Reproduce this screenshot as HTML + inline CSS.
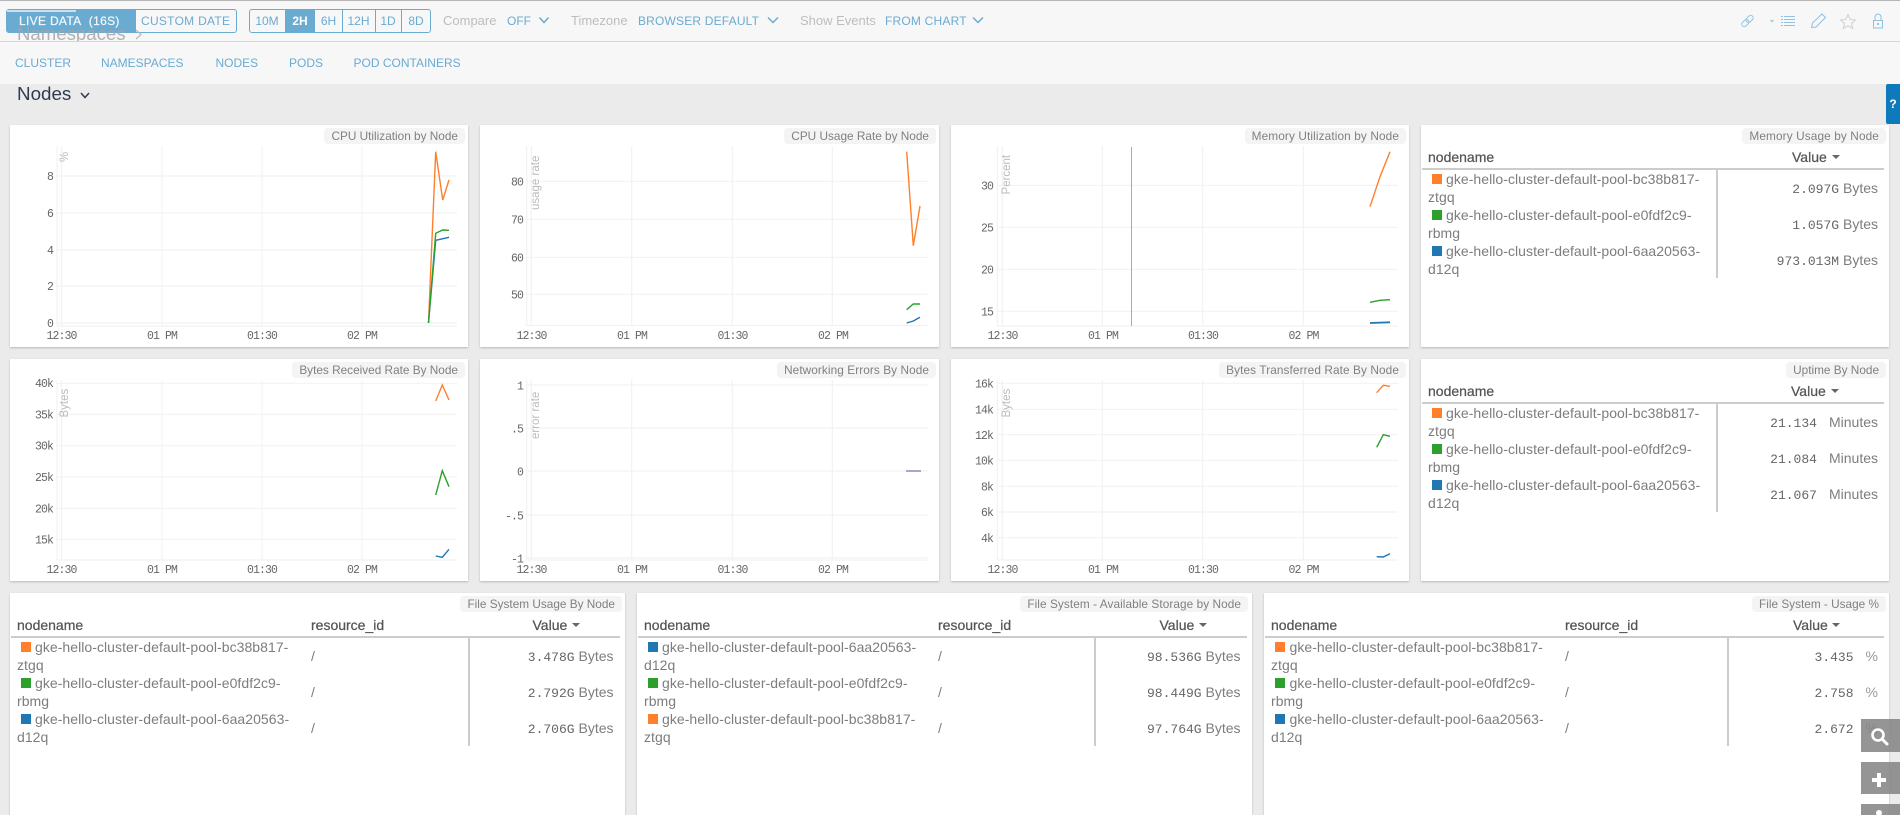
<!DOCTYPE html>
<html><head><meta charset="utf-8"><title>Nodes</title>
<style>
html,body{margin:0;padding:0;width:1900px;height:815px;overflow:hidden;background:#ebebeb}
body{position:relative;font-family:"Liberation Sans",sans-serif;color:#777}
div,span.a{position:absolute;white-space:nowrap}
.tb{left:0;top:0;width:1900px;background:#f7f7f7;border-top:1px solid #b5b5b5;box-sizing:border-box;border-bottom:1px solid #d6d6d6;height:42px}
.nv{left:0;top:42px;width:1900px;height:42px;background:#f7f7f7}
.c{color:#6aabd2;font-size:12px;line-height:16px;height:16px}
.g{color:#bdbdbd;font-size:13px;line-height:16px;height:16px;top:13px}
.p{background:#fff;box-shadow:0 1px 2px rgba(0,0,0,.22)}
.tag{background:#f4f4f4;border-radius:4px;font-size:11.8px;line-height:16px;height:16px;padding:0 7px;color:#808080}
.h{font-size:14px;line-height:18px;color:#555;-webkit-text-stroke:.25px #555}
.r{height:2px;background:#ccc}
.s{width:2px;background:#ccc}
.w{width:10px;height:10px}
.o{background:#ff7f2a}.e{background:#2ca02c}.b{background:#1f77b4}
.n{font-size:14px;line-height:18px;color:#7d7d7d;letter-spacing:.05px}
.v{font-size:14px;line-height:18px;color:#7d7d7d;text-align:right}
.v i{font:13px "Liberation Mono",monospace;color:#666}
.tri{width:0;height:0;border-left:4px solid transparent;border-right:4px solid transparent;border-top:4px solid #666}
svg{position:absolute;left:0;top:0}
.gr{stroke:#f2f2f2;stroke-width:1.2;fill:none}
.ln{fill:none;stroke-width:1.4}
.lb{font:11.5px "Liberation Mono",monospace;fill:#666;letter-spacing:-.9px}
.yt{font:11.5px "Liberation Sans",sans-serif;fill:#bbb}
.fb{left:1861px;width:39px;background:rgba(130,130,130,.85)}
</style></head><body>

<div class="tb"></div>
<div class="nv"></div>

<div style="left:6px;top:9px;width:130px;height:24px;background:#6aabd2;border-radius:3px 0 0 3px;box-sizing:border-box;border:1px solid #6aabd2"></div>
<div style="left:17px;top:23px;height:18px;overflow:hidden;font-size:18.6px;line-height:22px;color:#a5a5a5;opacity:.85">Namespaces</div>
<svg width="1900" height="815" style="z-index:1"><polyline points="136,30 141,34.5 136,39" fill="none" stroke="#bbb" stroke-width="1.3"/></svg>

<div style="left:7px;top:10px;width:69px;height:1.5px;background:#c9e1ef"></div>
<div class="c" style="left:19px;top:13px;color:#f4f9fc;letter-spacing:.32px;-webkit-text-stroke:.2px #f4f9fc">LIVE DATA&nbsp;&nbsp;(16S)</div>
<div style="left:135px;top:9px;width:102px;height:24px;box-sizing:border-box;border:1px solid #6aabd2;border-left:0;border-radius:0 3px 3px 0"></div>
<div class="c" style="left:141px;top:13px;letter-spacing:.28px">CUSTOM DATE</div>

<div style="left:249px;top:9px;width:182px;height:24px;box-sizing:border-box;border:1px solid #6aabd2;border-radius:3px"></div>
<div style="left:285px;top:9px;width:30px;height:24px;background:#6aabd2"></div>
<div style="left:342px;top:9px;width:1px;height:24px;background:#6aabd2"></div>
<div style="left:375px;top:9px;width:1px;height:24px;background:#6aabd2"></div>
<div style="left:401px;top:9px;width:1px;height:24px;background:#6aabd2"></div>
<div class="c" style="left:249px;width:36px;text-align:center;top:13px">10M</div>
<div class="c" style="left:285px;width:30px;text-align:center;top:13px;color:#fff;font-weight:bold">2H</div>
<div class="c" style="left:315px;width:27px;text-align:center;top:13px">6H</div>
<div class="c" style="left:342px;width:33px;text-align:center;top:13px">12H</div>
<div class="c" style="left:375px;width:26px;text-align:center;top:13px">1D</div>
<div class="c" style="left:401px;width:30px;text-align:center;top:13px">8D</div>

<div class="g" style="left:443px">Compare</div>
<div class="c" style="left:507px;top:13px">OFF</div>
<div class="g" style="left:571px">Timezone</div>
<div class="c" style="left:638px;top:13px;letter-spacing:.18px">BROWSER DEFAULT</div>
<div class="g" style="left:800px">Show Events</div>
<div class="c" style="left:885px;top:13px;letter-spacing:.2px">FROM CHART</div>

<div class="c" style="left:15px;top:55px">CLUSTER</div>
<div class="c" style="left:101px;top:55px">NAMESPACES</div>
<div class="c" style="left:215.5px;top:55px">NODES</div>
<div class="c" style="left:289px;top:55px">PODS</div>
<div class="c" style="left:353.5px;top:55px">POD CONTAINERS</div>

<div style="left:17px;top:83px;font-size:18.8px;line-height:22px;color:#2f3a50">Nodes</div>

<div style="left:1886px;top:84px;width:14px;height:40px;background:#0f7abb;border-radius:2px 0 0 2px;color:#fff;font-weight:bold;font-size:12px;line-height:40px;text-align:center">?</div>

<!-- panels -->
<div class="p" style="left:10px;top:125px;width:458px;height:222px"></div>
<div class="p" style="left:480px;top:125px;width:459px;height:222px"></div>
<div class="p" style="left:951px;top:125px;width:458px;height:222px"></div>
<div class="p" style="left:1421px;top:125px;width:468px;height:222px"></div>
<div class="p" style="left:10px;top:359px;width:458px;height:222px"></div>
<div class="p" style="left:480px;top:359px;width:459px;height:222px"></div>
<div class="p" style="left:951px;top:359px;width:458px;height:222px"></div>
<div class="p" style="left:1421px;top:359px;width:468px;height:222px"></div>
<div class="p" style="left:10px;top:593px;width:615px;height:240px"></div>
<div class="p" style="left:637px;top:593px;width:615px;height:240px"></div>
<div class="p" style="left:1264px;top:593px;width:625px;height:240px"></div>

<!-- tags -->
<div class="tag" style="right:1435px;top:128px">CPU Utilization by Node</div>
<div class="tag" style="right:964px;top:128px">CPU Usage Rate by Node</div>
<div class="tag" style="right:494px;top:128px;letter-spacing:.12px">Memory Utilization by Node</div>
<div class="tag" style="right:14px;top:128px;letter-spacing:.12px">Memory Usage by Node</div>
<div class="tag" style="right:1435px;top:362px">Bytes Received Rate By Node</div>
<div class="tag" style="right:964px;top:362px;letter-spacing:.08px">Networking Errors By Node</div>
<div class="tag" style="right:494px;top:362px;letter-spacing:.1px">Bytes Transferred Rate By Node</div>
<div class="tag" style="right:14px;top:362px">Uptime By Node</div>
<div class="tag" style="right:1278px;top:596px">File System Usage By Node</div>
<div class="tag" style="right:652px;top:596px;letter-spacing:.07px">File System - Available Storage by Node</div>
<div class="tag" style="right:14px;top:596px">File System - Usage %</div>

<svg width="1900" height="815" style="z-index:1">
<!-- toolbar chevrons -->
<g fill="none" stroke="#6aabd2" stroke-width="1.5">
<polyline points="539.5,17.5 544,22.5 548.5,17.5"/>
<polyline points="768,17.5 773,22.5 778,17.5"/>
<polyline points="973,17.5 978,22.5 983,17.5"/>
</g>
<polyline points="81,93 85,97.5 89,93" fill="none" stroke="#2f3a50" stroke-width="1.5"/>
<!-- right icons -->
<g fill="none" stroke="#8fc1e0" stroke-width="1">
<g transform="rotate(-45 1747.5 21)"><rect x="1740.5" y="18.5" width="8" height="5" rx="2.5"/><rect x="1746.5" y="18.5" width="8" height="5" rx="2.5"/></g>
<polyline points="1770.5,20 1772,21.5 1773.5,20"/>
<path d="M1784 16.5h11M1784 19.5h11M1784 22.5h11M1784 25.5h11"/>
<path d="M1781 16.5h2M1781 19.5h2M1781 22.5h2M1781 25.5h2"/>
<path d="M1811.5 27.5l1-4.5 9.5-9 3.5 3.5-9.5 9.5z"/>
<rect x="1873.5" y="20.5" width="9" height="7.5"/>
<path d="M1875 20.5v-3.5a3 3 0 0 1 6 0v3.5"/>
</g>
<rect x="1877" y="23" width="2" height="2" fill="#8fc1e0"/>
<polygon points="1848,14.5 1850.2,19.5 1855.5,20 1851.5,23.5 1852.7,28.5 1848,25.8 1843.3,28.5 1844.5,23.5 1840.5,20 1845.8,19.5" fill="none" stroke="#cfcfcf" stroke-width="1"/>

<!-- Chart 1 -->
<path class="gr" d="M57 146V326M61.5 146V326M162 146V326M262 146V326M362 146V326M57 176H457M57 213H457M57 250H457M57 286H457M57 323H457M57 326H457"/>
<g class="lb" text-anchor="end"><text x="53" y="180">8</text><text x="53" y="217">6</text><text x="53" y="254">4</text><text x="53" y="290">2</text><text x="53" y="327">0</text></g>
<g class="lb" text-anchor="middle"><text x="61.5" y="339">12:30</text><text x="162" y="339">01 PM</text><text x="262" y="339">01:30</text><text x="362" y="339">02 PM</text></g>
<text class="yt" transform="translate(68,162) rotate(-90)">%</text>
<polyline class="ln" stroke="#ff7f2a" points="428.5,323 435.7,151.7 442.7,200 449,180"/>
<polyline class="ln" stroke="#1f77b4" points="428.5,323 435.7,240.3 449,237.3"/>
<polyline class="ln" stroke="#2ca02c" points="428.5,323 435.7,233.3 442.7,230 449,230.3"/>

<!-- Chart 2 -->
<path class="gr" d="M526.7 146V326M531.3 146V326M631.7 146V326M732.3 146V326M832.3 146V326M526.7 181.3H927.7M526.7 219.3H927.7M526.7 257.3H927.7M526.7 294.3H927.7M526.7 325.5H927.7"/>
<g class="lb" text-anchor="end"><text x="523" y="185.5">80</text><text x="523" y="223.5">70</text><text x="523" y="261.5">60</text><text x="523" y="298.5">50</text></g>
<g class="lb" text-anchor="middle"><text x="531.5" y="339">12:30</text><text x="632" y="339">01 PM</text><text x="732.5" y="339">01:30</text><text x="833" y="339">02 PM</text></g>
<text class="yt" transform="translate(539,210) rotate(-90)">usage rate</text>
<polyline class="ln" stroke="#ff7f2a" points="906.7,151.7 913.3,245.7 920,206"/>
<polyline class="ln" stroke="#2ca02c" points="906.7,309.7 913.3,304 920,304"/>
<polyline class="ln" stroke="#1f77b4" points="906.7,323 913.3,321 920,317.3"/>

<!-- Chart 3 -->
<path class="gr" d="M997.3 146V326M1002.3 146V326M1102.3 146V326M1202.7 146V326M1303.3 146V326M997.3 185.3H1398M997.3 227.3H1398M997.3 269.3H1398M997.3 311.3H1398M997.3 326H1398"/>
<path d="M1131.5 147V326" stroke="#aaa" stroke-width="1"/>
<g class="lb" text-anchor="end"><text x="993" y="189.5">30</text><text x="993" y="231.5">25</text><text x="993" y="273.5">20</text><text x="993" y="315.5">15</text></g>
<g class="lb" text-anchor="middle"><text x="1002.5" y="339">12:30</text><text x="1103" y="339">01 PM</text><text x="1203" y="339">01:30</text><text x="1303.5" y="339">02 PM</text></g>
<text class="yt" transform="translate(1010,194.5) rotate(-90)">Percent</text>
<polyline class="ln" stroke="#ff7f2a" points="1370,206.7 1380,176.7 1390,151.7"/>
<polyline class="ln" stroke="#2ca02c" points="1370,302.3 1380,300.3 1390,299.7"/>
<polyline class="ln" stroke="#1f77b4" style="stroke-width:1.8" points="1370,323 1390,322.3"/>

<!-- Chart 4 -->
<path class="gr" d="M57 380V560M61.5 380V560M162 380V560M262 380V560M362 380V560M57 383.3H457M57 414.3H457M57 445.7H457M57 477H457M57 508.3H457M57 539.3H457M57 560H457"/>
<g class="lb" text-anchor="end"><text x="53" y="387">40k</text><text x="53" y="418.5">35k</text><text x="53" y="449.5">30k</text><text x="53" y="481">25k</text><text x="53" y="512.5">20k</text><text x="53" y="543.5">15k</text></g>
<g class="lb" text-anchor="middle"><text x="61.5" y="573">12:30</text><text x="162" y="573">01 PM</text><text x="262" y="573">01:30</text><text x="362" y="573">02 PM</text></g>
<text class="yt" transform="translate(68,417.5) rotate(-90)">Bytes</text>
<polyline class="ln" stroke="#ff7f2a" points="435.7,401 442.3,385 449,400"/>
<polyline class="ln" stroke="#2ca02c" points="435.7,495 442.3,470.7 449,486.7"/>
<polyline class="ln" stroke="#1f77b4" points="435.7,556 442.3,557.3 449,549.3"/>

<!-- Chart 5 -->
<path class="gr" d="M526.7 380V560M531.3 380V560M631.7 380V560M732.3 380V560M832.3 380V560M526.7 385H927.7M526.7 428H927.7M526.7 471H927.7M526.7 515H927.7M526.7 558H927.7M526.7 560H927.7"/>
<g class="lb" text-anchor="end"><text x="523" y="389.5">1</text><text x="523" y="432.5">.5</text><text x="523" y="475.5">0</text><text x="523" y="519.5">-.5</text><text x="523" y="562.5">-1</text></g>
<g class="lb" text-anchor="middle"><text x="531.5" y="573">12:30</text><text x="632" y="573">01 PM</text><text x="732.5" y="573">01:30</text><text x="833" y="573">02 PM</text></g>
<text class="yt" transform="translate(539,439) rotate(-90)">error rate</text>
<path d="M906 471H921" stroke="#7a6aa0" stroke-width="1.2"/>

<!-- Chart 6 -->
<path class="gr" d="M997.3 380V560M1002.3 380V560M1102.3 380V560M1202.7 380V560M1303.3 380V560M997.3 383.3H1398M997.3 409.3H1398M997.3 434.7H1398M997.3 460.3H1398M997.3 486.3H1398M997.3 512H1398M997.3 537.7H1398M997.3 560H1398"/>
<g class="lb" text-anchor="end"><text x="993" y="387.5">16k</text><text x="993" y="413.5">14k</text><text x="993" y="439">12k</text><text x="993" y="464.5">10k</text><text x="993" y="490.5">8k</text><text x="993" y="516">6k</text><text x="993" y="542">4k</text></g>
<g class="lb" text-anchor="middle"><text x="1002.5" y="573">12:30</text><text x="1103" y="573">01 PM</text><text x="1203" y="573">01:30</text><text x="1303.5" y="573">02 PM</text></g>
<text class="yt" transform="translate(1010,417.5) rotate(-90)">Bytes</text>
<polyline class="ln" stroke="#ff7f2a" points="1376.7,392.7 1383.3,385.3 1390,386.3"/>
<polyline class="ln" stroke="#2ca02c" points="1376.7,447.3 1383.3,434.7 1390,436.3"/>
<polyline class="ln" stroke="#1f77b4" points="1376.7,556.7 1383.3,557 1390,553.7"/>
</svg>

<!-- Memory Usage table -->
<div class="h" style="left:1428px;top:148px">nodename</div>
<div class="h" style="left:1792px;top:148px">Value</div><div class="tri" style="left:1832px;top:155px"></div>
<div class="r" style="left:1422px;top:168px;width:462px"></div>
<div class="s" style="left:1716px;top:170px;height:108px"></div>
<div class="w o" style="left:1432px;top:174px"></div><div class="n" style="left:1446px;top:170px">gke-hello-cluster-default-pool-bc38b817-</div><div class="n" style="left:1428px;top:188px">ztgq</div>
<div class="w e" style="left:1432px;top:210px"></div><div class="n" style="left:1446px;top:206px">gke-hello-cluster-default-pool-e0fdf2c9-</div><div class="n" style="left:1428px;top:224px">rbmg</div>
<div class="w b" style="left:1432px;top:246px"></div><div class="n" style="left:1446px;top:242px">gke-hello-cluster-default-pool-6aa20563-</div><div class="n" style="left:1428px;top:260px">d12q</div>
<div class="v" style="right:22px;top:179px"><i>2.097G</i> Bytes</div>
<div class="v" style="right:22px;top:215px"><i>1.057G</i> Bytes</div>
<div class="v" style="right:22px;top:251px"><i>973.013M</i> Bytes</div>

<!-- Uptime table -->
<div class="h" style="left:1428px;top:382px">nodename</div>
<div class="h" style="left:1791px;top:382px">Value</div><div class="tri" style="left:1831px;top:389px"></div>
<div class="r" style="left:1422px;top:402px;width:462px"></div>
<div class="s" style="left:1716px;top:404px;height:108px"></div>
<div class="w o" style="left:1432px;top:408px"></div><div class="n" style="left:1446px;top:404px">gke-hello-cluster-default-pool-bc38b817-</div><div class="n" style="left:1428px;top:422px">ztgq</div>
<div class="w e" style="left:1432px;top:444px"></div><div class="n" style="left:1446px;top:440px">gke-hello-cluster-default-pool-e0fdf2c9-</div><div class="n" style="left:1428px;top:458px">rbmg</div>
<div class="w b" style="left:1432px;top:480px"></div><div class="n" style="left:1446px;top:476px">gke-hello-cluster-default-pool-6aa20563-</div><div class="n" style="left:1428px;top:494px">d12q</div>
<div class="v" style="right:22px;top:413px"><i>21.134</i><span style="margin-left:12px">Minutes</span></div>
<div class="v" style="right:22px;top:449px"><i>21.084</i><span style="margin-left:12px">Minutes</span></div>
<div class="v" style="right:22px;top:485px"><i>21.067</i><span style="margin-left:12px">Minutes</span></div>

<!-- FS usage -->
<div class="h" style="left:17px;top:616px">nodename</div><div class="h" style="left:311px;top:616px">resource_id</div>
<div class="h" style="left:532.5px;top:616px">Value</div><div class="tri" style="left:572px;top:623px"></div>
<div class="r" style="left:11px;top:636px;width:609px"></div>
<div class="s" style="left:468px;top:638px;height:108px"></div>
<div class="w o" style="left:20.5px;top:642px"></div><div class="n" style="left:35px;top:638px">gke-hello-cluster-default-pool-bc38b817-</div><div class="n" style="left:17px;top:656px">ztgq</div>
<div class="w e" style="left:20.5px;top:678px"></div><div class="n" style="left:35px;top:674px">gke-hello-cluster-default-pool-e0fdf2c9-</div><div class="n" style="left:17px;top:692px">rbmg</div>
<div class="w b" style="left:20.5px;top:714px"></div><div class="n" style="left:35px;top:710px">gke-hello-cluster-default-pool-6aa20563-</div><div class="n" style="left:17px;top:728px">d12q</div>
<div class="n" style="left:311px;top:647px">/</div><div class="n" style="left:311px;top:683px">/</div><div class="n" style="left:311px;top:719px">/</div>
<div class="v" style="right:1286.5px;top:647px"><i>3.478G</i> Bytes</div>
<div class="v" style="right:1286.5px;top:683px"><i>2.792G</i> Bytes</div>
<div class="v" style="right:1286.5px;top:719px"><i>2.706G</i> Bytes</div>

<!-- FS available -->
<div class="h" style="left:644px;top:616px">nodename</div><div class="h" style="left:938px;top:616px">resource_id</div>
<div class="h" style="left:1159.5px;top:616px">Value</div><div class="tri" style="left:1199px;top:623px"></div>
<div class="r" style="left:638px;top:636px;width:609px"></div>
<div class="s" style="left:1094px;top:638px;height:108px"></div>
<div class="w b" style="left:647.5px;top:642px"></div><div class="n" style="left:662px;top:638px">gke-hello-cluster-default-pool-6aa20563-</div><div class="n" style="left:644px;top:656px">d12q</div>
<div class="w e" style="left:647.5px;top:678px"></div><div class="n" style="left:662px;top:674px">gke-hello-cluster-default-pool-e0fdf2c9-</div><div class="n" style="left:644px;top:692px">rbmg</div>
<div class="w o" style="left:647.5px;top:714px"></div><div class="n" style="left:662px;top:710px">gke-hello-cluster-default-pool-bc38b817-</div><div class="n" style="left:644px;top:728px">ztgq</div>
<div class="n" style="left:938px;top:647px">/</div><div class="n" style="left:938px;top:683px">/</div><div class="n" style="left:938px;top:719px">/</div>
<div class="v" style="right:659.5px;top:647px"><i>98.536G</i> Bytes</div>
<div class="v" style="right:659.5px;top:683px"><i>98.449G</i> Bytes</div>
<div class="v" style="right:659.5px;top:719px"><i>97.764G</i> Bytes</div>

<!-- FS usage % -->
<div class="h" style="left:1271px;top:616px">nodename</div><div class="h" style="left:1565px;top:616px">resource_id</div>
<div class="h" style="left:1793px;top:616px">Value</div><div class="tri" style="left:1832px;top:623px"></div>
<div class="r" style="left:1265px;top:636px;width:619px"></div>
<div class="s" style="left:1727px;top:638px;height:108px"></div>
<div class="w o" style="left:1275px;top:642px"></div><div class="n" style="left:1289.5px;top:638px">gke-hello-cluster-default-pool-bc38b817-</div><div class="n" style="left:1271px;top:656px">ztgq</div>
<div class="w e" style="left:1275px;top:678px"></div><div class="n" style="left:1289.5px;top:674px">gke-hello-cluster-default-pool-e0fdf2c9-</div><div class="n" style="left:1271px;top:692px">rbmg</div>
<div class="w b" style="left:1275px;top:714px"></div><div class="n" style="left:1289.5px;top:710px">gke-hello-cluster-default-pool-6aa20563-</div><div class="n" style="left:1271px;top:728px">d12q</div>
<div class="n" style="left:1565px;top:647px">/</div><div class="n" style="left:1565px;top:683px">/</div><div class="n" style="left:1565px;top:719px">/</div>
<div class="v" style="right:22px;top:647px"><i>3.435</i><span style="margin-left:12px;color:#999">%</span></div>
<div class="v" style="right:22px;top:683px"><i>2.758</i><span style="margin-left:12px;color:#999">%</span></div>
<div class="v" style="right:22px;top:719px"><i>2.672</i><span style="margin-left:12px;color:#999">%</span></div>

<!-- floating buttons -->
<div class="fb" style="top:719px;height:33px"></div>
<div class="fb" style="top:762px;height:32px"></div>
<div class="fb" style="top:804px;height:11px"></div>
<svg width="1900" height="815" style="z-index:3">
<circle cx="1878" cy="735" r="5.5" fill="none" stroke="#fff" stroke-width="2.6"/>
<path d="M1882 739l5 5" stroke="#fff" stroke-width="3" stroke-linecap="round"/>
<path d="M1879 773v14M1872 780h14" stroke="#fff" stroke-width="4"/>
<circle cx="1879" cy="813" r="3" fill="#fff"/>
</svg>
</body></html>
